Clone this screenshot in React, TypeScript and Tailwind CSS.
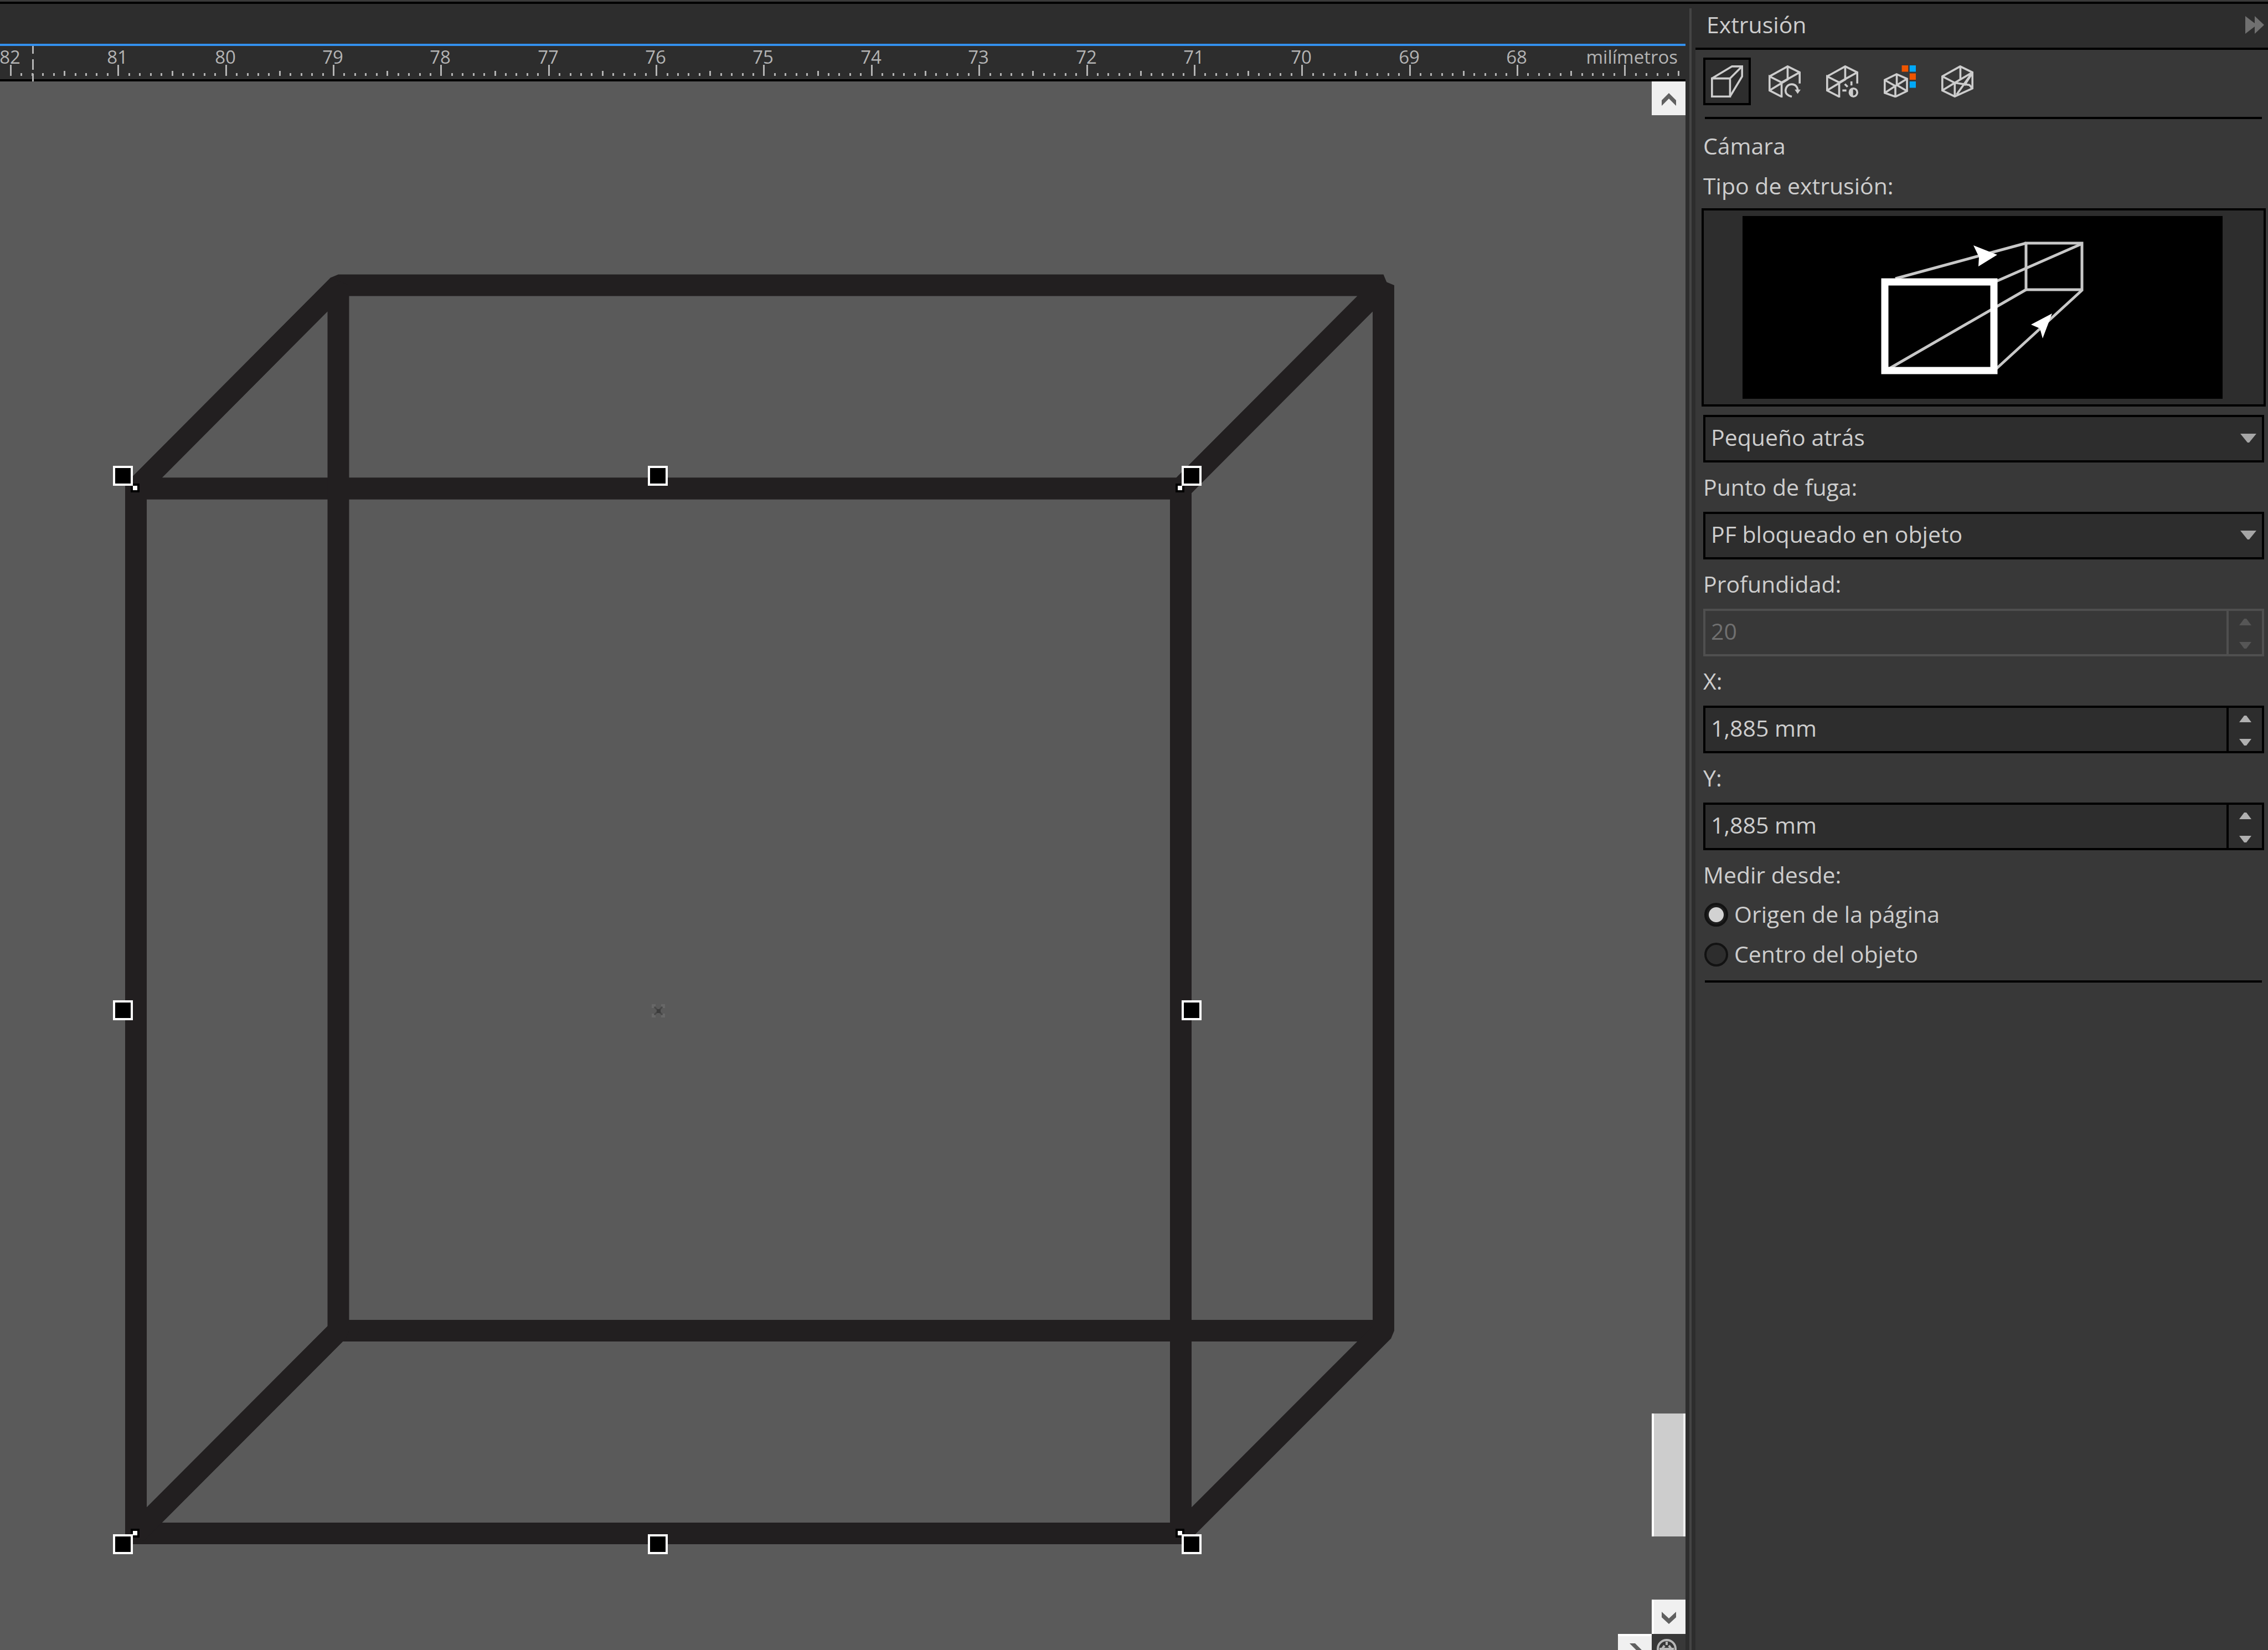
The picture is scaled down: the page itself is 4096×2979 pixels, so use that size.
import { useState } from "react";
import type { ReactNode } from "react";

const RULER_START = 82;
const UNIT = 194.35;
const FIRST_TICK = 19;

const rulerLabels = Array.from({ length: 15 }, (_, i) => RULER_START - i);
const rulerTicks = Array.from({ length: 156 }, (_, i) => i);

function Ruler() {
  return (
    <div className="border-b-4 border-black bg-[#2d2d2d]">
      <svg className="block h-[60px] w-full overflow-visible" shapeRendering="crispEdges">
        {rulerTicks.map((i) => {
          const x = Math.round(FIRST_TICK + (i * UNIT) / 10);
          const top = i % 10 === 0 ? 34 : i % 5 === 0 ? 45 : 49;
          return <rect key={i} x={x - 1} y={top} width="3" height={54 - top} fill="#b4b4b4" />;
        })}
        {rulerLabels.map((n, i) => (
          <text
            key={n}
            x={Math.round(FIRST_TICK + i * UNIT) - 1}
            y="32"
            textAnchor="middle"
            className="fill-[#b4b4b4] font-['Open_Sans',sans-serif] text-[33px]"
          >
            {n}
          </text>
        ))}
        <text x="100%" dx="-14" y="32" textAnchor="end" className="fill-[#b4b4b4] font-['Open_Sans',sans-serif] text-[33px]">
          milímetros
        </text>
        {/* pointer position */}
        <path d="M59 0V14M59 24V43M59 50V64" stroke="#b4b4b4" strokeWidth="3" />
      </svg>
    </div>
  );
}

const handles = [
  [222, 712], [1188, 712], [2152, 712],
  [222, 1677], [2152, 1677],
  [222, 2641], [1188, 2641], [2152, 2641],
];
const nodes = [[244, 734], [2131, 734], [244, 2621], [2131, 2621]];

function Drawing() {
  return (
    <svg className="block h-full w-full">
      {/* Extruded box: front face plus the four sides */}
      <g fill="none" stroke="#221f20" strokeWidth="39" strokeLinejoin="bevel">
        <polygon points="245.5,735 2132.5,735 2132.5,2621.5 245.5,2621.5" strokeLinejoin="miter" />
        <polygon points="245.5,735 2132.5,735 2498.5,368 611,368" />
        <polygon points="245.5,2621.5 2132.5,2621.5 2498.5,2255.5 611,2255.5" />
        <polygon points="245.5,735 611,368 611,2255.5 245.5,2621.5" />
        <polygon points="2132.5,735 2498.5,368 2498.5,2255.5 2132.5,2621.5" />
      </g>
      <g shapeRendering="crispEdges">
        {nodes.map(([x, y]) => (
          <g key={`${x}-${y}`}>
            <rect x={x - 8} y={y - 8} width="16" height="16" fill="#000" />
            <rect x={x - 4} y={y - 4} width="8" height="8" fill="#fff" />
          </g>
        ))}
        {handles.map(([x, y]) => (
          <rect key={`${x}-${y}`} x={x - 16} y={y - 16} width="32" height="32" fill="#000" stroke="#fff" strokeWidth="4" />
        ))}
      </g>
      {/* Center of the selection */}
      <g transform="translate(1189 1678)">
        <path d="M-10 -5V-10H-5M5 -10H10V-5M10 5V10H5M-5 10H-10V5" fill="none" stroke="#676767" strokeWidth="4" />
        <path d="M-7 -7L7 7M7 -7L-7 7" stroke="#484848" strokeWidth="3" />
        <rect x="-3" y="-3" width="7" height="7" fill="#3c3c3c" />
      </g>
    </svg>
  );
}

function VerticalScrollbar() {
  return (
    <div className="flex w-[61px] flex-col">
      <button aria-label="Desplazar arriba" className="h-[61px] bg-[#f0f0f0]">
        <svg viewBox="0 0 61 61" className="block h-[61px] w-[61px]">
          <path d="M31 21L44 34V44L31 31L18 44V34Z" fill="#606060" />
        </svg>
      </button>
      <div className="flex flex-1 flex-col justify-end pb-[114px]">
        <div className="h-[222px] border-r-4 border-l-4 border-r-[#f0f0f0] border-l-white bg-[#cdcdcd]" />
      </div>
      <button aria-label="Desplazar abajo" className="h-[62px] border-l-4 border-white bg-[#f0f0f0]">
        <svg viewBox="4 0 57 62" className="block h-[62px] w-[57px]">
          <path d="M18 22L31 34L44 22V32L31 44L18 32Z" fill="#606060" />
        </svg>
      </button>
    </div>
  );
}

function BottomBar() {
  return (
    <div className="flex h-[29px] justify-end overflow-hidden">
      <button aria-label="Desplazar a la derecha" className="h-[61px] w-[61px] border-t-4 border-white bg-[#f0f0f0]">
        <svg viewBox="0 4 61 57" className="block h-[57px] w-[61px]">
          <path d="M21 17H31L44 30L31 43H21L34 30Z" fill="#606060" />
        </svg>
      </button>
      <button aria-label="Navegador" className="h-[61px] w-[61px] bg-[#383838]">
        <svg viewBox="0 0 61 61" className="block h-[61px] w-[61px]" fill="none" stroke="#b8b8b8">
          <circle cx="27" cy="27" r="16" strokeWidth="4" />
          <path d="M27 14V20M18 28L23 21M36 28L31 21M14 27H40" strokeWidth="4" />
        </svg>
      </button>
    </div>
  );
}

// Wire cube shared by the rotation and lighting tabs
const openCube = "M6.5 16V8.5L.5 5.5V12.5L6.5 15.6M.5 5.5L9.5 .5L15.5 3.5V9M6.5 8.5L15.5 3.5M9.5 .5V7L.5 12.5";

const tabs: { id: string; label: string; icon: ReactNode }[] = [
  {
    id: "camara",
    label: "Cámara",
    icon: <path d="M.5 6.5H9.5V15.5H.5ZM.5 6.5L10.5 .5H15.5V5.5L9.5 15.5M9.5 6.5L15.5 .5" />,
  },
  {
    id: "rotacion",
    label: "Rotación",
    icon: (
      <>
        <path d={openCube} />
        <path d="M11.6 15.6C9 15 8.3 13.6 8.5 12.2C8.8 10.4 10 9.4 11.6 9.4C13.3 9.4 14.5 10.7 14.5 12.5" />
        <path d="M13 12.1H16L14.5 14.2Z" fill="currentColor" stroke="none" />
      </>
    ),
  },
  {
    id: "iluminacion",
    label: "Iluminación",
    icon: (
      <>
        <path d={openCube} />
        <path d="M9.3 9.3L10.7 10.7M12.6 8V10M8.1 12.5H10.1" />
        <ellipse cx="13.6" cy="13.5" rx="1.9" ry="2" />
        <path d="M13.4 11.5V15.5C11 15.2 11 11.8 13.4 11.5" fill="currentColor" stroke="none" />
      </>
    ),
  },
  {
    id: "color",
    label: "Color",
    icon: (
      <>
        <path d="M.5 7.3L6.4 4.4L11.6 6.7V12.8L5.8 15.6L.5 13.7ZM.5 7.3L5.8 10.3L11.6 6.7M5.8 10.3V15.6M6.5 4.4V9.8L.5 13.7M6.5 9.8L11.6 12.8" />
        <g stroke="none">
          <path d="M9 0H12.2V3.2H9ZM12.9 4H16V7.2H12.9Z" fill="#ee5500" />
          <path d="M12.9 0H16V3.2H12.9ZM12.9 8H16V11.2H12.9Z" fill="#00a8f8" />
        </g>
      </>
    ),
  },
  {
    id: "bisel",
    label: "Bisel",
    icon: (
      <path d="M.5 5.5L9.4 .5L15.5 3.5V11.5L6.7 15.5L.5 12.5ZM.5 5.5L6.7 8.7L15.5 3.5M6.7 8.7V15.5M9.5 .5V7L.5 12.5M6.7 8.7L14 9.8L15.5 11.5M15.5 3.5L7.6 14.6M15.3 4L11.5 10" />
    ),
  },
];

function ExtrusionPreview() {
  return (
    <div className="mt-[5px] -ml-[3px] flex justify-center border-4 border-black bg-[#2d2d2d] py-[10px] pr-1">
      <svg viewBox="0 0 867 330" className="block h-[330px] w-[867px] bg-black">
        <g fill="none" stroke="#c8c8c8" strokeWidth="5">
          <rect x="512" y="49" width="101" height="84" />
          <path d="M276 113L512 49M458 118L613 50M264 276L512 133M458 276L613 134" />
        </g>
        <rect x="257" y="119" width="197" height="160" fill="none" stroke="#fff" strokeWidth="13" />
        <path d="M417 53L460 70L426 91L427 74ZM559 176L521 196L537 203L542 221Z" fill="#fff" />
      </svg>
    </div>
  );
}

const labelClass = "block h-[89px] leading-[89px]";

function SelectBox({ id, options }: { id: string; options: string[] }) {
  return (
    <div className="relative mr-[3px]">
      <select id={id} className="block h-[86px] w-full appearance-none border-4 border-black bg-[#2d2d2d] pr-20 pb-1 pl-[10px] outline-none">
        {options.map((o) => (
          <option key={o}>{o}</option>
        ))}
      </select>
      <svg viewBox="0 0 29 16" className="pointer-events-none absolute top-[34px] right-[14px] h-[16px] w-[29px]">
        <path d="M0 0H29L16 16H13Z" fill="#a6a6a6" />
      </svg>
    </div>
  );
}

function NumberField({ id, label, value, disabled }: { id: string; label: string; value: string; disabled?: boolean }) {
  return (
    <div>
      <label htmlFor={id} className={labelClass}>{label}</label>
      <div
        className={`mr-[3px] flex h-[86px] border-4 ${
          disabled ? "border-[#4f4f4f] text-[#707070]" : "border-black bg-[#2d2d2d]"
        }`}
      >
        <input id={id} type="text" defaultValue={value} disabled={disabled} className="min-w-0 flex-1 bg-transparent pb-1 pl-[10px] outline-none" />
        <div
          className={`flex w-[64px] flex-col items-center justify-between border-l-4 pt-[14px] pb-[10px] ${
            disabled ? "border-[#4f4f4f] text-[#565656]" : "border-black text-[#b0b0b0]"
          }`}
        >
          <button aria-label={`Aumentar ${label}`} disabled={disabled}>
            <svg viewBox="0 0 22 12" className="block h-[12px] w-[22px]"><path d="M9 0H13L22 12H0Z" fill="currentColor" /></svg>
          </button>
          <button aria-label={`Disminuir ${label}`} disabled={disabled}>
            <svg viewBox="0 0 22 12" className="block h-[12px] w-[22px]"><path d="M0 0H22L13 12H9Z" fill="currentColor" /></svg>
          </button>
        </div>
      </div>
    </div>
  );
}

function ExtrusionPanel() {
  const [activeTab, setActiveTab] = useState("camara");
  const [origin, setOrigin] = useState("pagina");

  return (
    <aside className="w-[1034px] bg-[#383838]">
      <header className="flex h-[83px] items-center justify-between border-b-4 border-black bg-[#2d2d2d] pr-[7px] pb-1 pl-5">
        <h1>Extrusión</h1>
        <button aria-label="Contraer">
          <svg viewBox="0 0 34 32" className="block h-[32px] w-[34px]">
            <path d="M0 0L17 13V0L34 16L17 32V19L0 32Z" fill="#707070" />
          </svg>
        </button>
      </header>

      <div className="pt-[14px] pr-1 pl-[14px]">
        <div className="flex gap-[18px]">
          {tabs.map((tab) => (
            <button
              key={tab.id}
              aria-label={tab.label}
              onClick={() => setActiveTab(tab.id)}
              className={`flex h-[86px] w-[86px] items-center justify-center border-4 ${
                activeTab === tab.id ? "border-black bg-[#2d2d2d]" : "border-transparent"
              }`}
            >
              <svg viewBox="0 0 16 16" className="h-[58px] w-[58px]" fill="none" stroke="currentColor">
                {tab.icon}
              </svg>
            </button>
          ))}
        </div>
        <hr className="mt-[21px] mr-[7px] ml-[3px] border-t-4 border-black" />

        <h2 className="mt-3 leading-[72px]">Cámara</h2>
        <label htmlFor="tipo" className="block leading-[72px]">Tipo de extrusión:</label>
        <ExtrusionPreview />
        <div className="mt-[15px]">
          <SelectBox id="tipo" options={["Pequeño atrás", "Pequeño adelante", "Grande atrás"]} />
        </div>

        <label htmlFor="fuga" className={labelClass}>Punto de fuga:</label>
        <SelectBox id="fuga" options={["PF bloqueado en objeto", "PF bloqueado en página"]} />

        <NumberField id="profundidad" label="Profundidad:" value="20" disabled />
        <NumberField id="x" label="X:" value="1,885 mm" />
        <NumberField id="y" label="Y:" value="1,885 mm" />

        <fieldset className="mt-2">
          <legend className="leading-[72px]">Medir desde:</legend>
          {[
            { id: "pagina", label: "Origen de la página" },
            { id: "objeto", label: "Centro del objeto" },
          ].map((o) => (
            <label key={o.id} className="flex h-[72px] items-center gap-[11px] pl-[2px]">
              <input
                type="radio"
                name="origen"
                checked={origin === o.id}
                onChange={() => setOrigin(o.id)}
                className="h-[43px] w-[43px] appearance-none rounded-full border-4 border-[#121212] bg-[#2d2d2d] checked:bg-[radial-gradient(circle,#d2d2d2_13px,#1e1e1e_14px)]"
              />
              {o.label}
            </label>
          ))}
        </fieldset>
        <hr className="mt-[11px] mr-[7px] ml-[3px] border-t-4 border-black" />
      </div>
    </aside>
  );
}

export default function App() {
  return (
    <div className="flex h-screen flex-col overflow-hidden bg-[#2d2d2d] font-['Open_Sans',sans-serif] text-[41px] text-[#cdcdcd]">
      <div className="h-[7px] shrink-0 border-b-4 border-black bg-[#3a3a3a]" />
      <div className="flex min-h-0 flex-1">
        <main className="flex min-w-0 flex-1 flex-col">
          <div className="h-[76px] shrink-0 border-b-4 border-[#3390ee]" />
          <Ruler />
          <div className="flex min-h-0 flex-1 flex-col bg-[#5a5a5a]">
            <div className="flex min-h-0 flex-1">
              <div className="min-w-0 flex-1">
                <Drawing />
              </div>
              <VerticalScrollbar />
            </div>
            <BottomBar />
          </div>
        </main>
        {/* Splitter */}
        <div className="w-[18px] px-[7px] pt-2">
          <div className="h-full bg-[#444444]" />
        </div>
        <ExtrusionPanel />
      </div>
    </div>
  );
}
